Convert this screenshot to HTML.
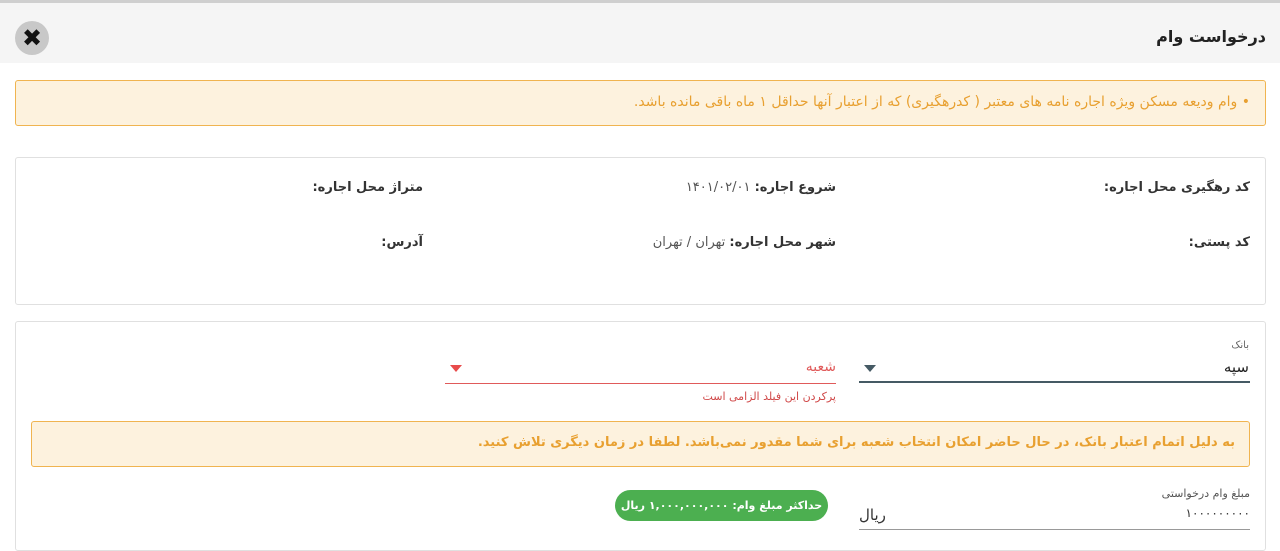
<!DOCTYPE html>
<html><head><meta charset="utf-8"><style>
*{margin:0;padding:0;box-sizing:border-box}
body{width:1280px;height:537px;overflow:hidden;background:#fff;font-family:"DejaVu Sans","Liberation Sans",sans-serif;position:relative}
.a{position:absolute;white-space:nowrap;direction:rtl}
</style></head><body>
<div class="a" style="left:0;top:0;width:1280px;height:63px;background:#f5f5f5;border-top:3px solid #cfcfcf"></div>
<div class="a" style="left:15px;top:21px;width:34px;height:34px;border-radius:50%;background:#c8c8c8;color:#111;font-size:24px;font-weight:bold;text-align:center;line-height:34px;direction:ltr">✖</div>
<div class="a" style="right:14px;top:27px;font-size:16px;font-weight:bold;color:#222">درخواست وام</div>

<div class="a" style="left:15px;top:80px;width:1251px;height:46px;background:#fdf2de;border:1px solid #f0b450;border-radius:3px"></div>
<div class="a" style="right:30px;top:94px;font-size:14px;color:#e8a030">• وام ودیعه مسکن ویژه اجاره نامه های معتبر ( کدرهگیری) که از اعتبار آنها حداقل ۱ ماه باقی مانده باشد.</div>

<div class="a" style="left:15px;top:157px;width:1251px;height:148px;border:1px solid #e0e0e0;border-radius:3px"></div>
<div class="a" style="right:30px;top:180px;font-size:13px;font-weight:bold;color:#333">کد رهگیری محل اجاره:</div>
<div class="a" style="right:444px;top:180px;font-size:13px;color:#555"><b style="color:#333">شروع اجاره:</b> ۱۴۰۱/۰۲/۰۱</div>
<div class="a" style="right:857px;top:180px;font-size:13px;font-weight:bold;color:#333">متراژ محل اجاره:</div>
<div class="a" style="right:30px;top:235px;font-size:13px;font-weight:bold;color:#333">کد پستی:</div>
<div class="a" style="right:444px;top:235px;font-size:13px;color:#555"><b style="color:#333">شهر محل اجاره:</b> تهران / تهران</div>
<div class="a" style="right:857px;top:235px;font-size:13px;font-weight:bold;color:#333">آدرس:</div>

<div class="a" style="left:15px;top:321px;width:1251px;height:230px;border:1px solid #e0e0e0;border-radius:3px"></div>
<div class="a" style="right:31px;top:340px;font-size:10px;color:#666">بانک</div>
<div class="a" style="right:31px;top:358px;font-size:15px;color:#222">سپه</div>
<div class="a" style="left:859px;top:381px;width:391px;height:2px;background:#455a64"></div>
<div class="a" style="left:864px;top:365px;width:0;height:0;border-left:6px solid transparent;border-right:6px solid transparent;border-top:7px solid #455a64"></div>
<div class="a" style="right:444px;top:359px;font-size:14px;color:#e05a5a">شعبه</div>
<div class="a" style="left:445px;top:383px;width:391px;height:1px;background:#e05a5a"></div>
<div class="a" style="left:450px;top:365px;width:0;height:0;border-left:6px solid transparent;border-right:6px solid transparent;border-top:7px solid #e84b4b"></div>
<div class="a" style="right:444px;top:390px;font-size:11px;color:#d04848">پرکردن این فیلد الزامی است</div>

<div class="a" style="left:31px;top:421px;width:1219px;height:46px;background:#fdf2de;border:1px solid #f0b450;border-radius:3px"></div>
<div class="a" style="right:45px;top:435px;font-size:13px;font-weight:bold;color:#e8a030">به دلیل اتمام اعتبار بانک، در حال حاضر امکان انتخاب شعبه برای شما مقدور نمی‌باشد. لطفا در زمان دیگری تلاش کنید.</div>

<div class="a" style="right:30px;top:487px;font-size:11px;color:#555">مبلغ وام درخواستی</div>
<div class="a" style="right:30px;top:506px;font-size:12px;color:#333">۱۰۰۰۰۰۰۰۰۰</div>
<div class="a" style="left:859px;top:506px;font-size:15px;color:#333">ریال</div>
<div class="a" style="left:859px;top:529px;width:391px;height:1px;background:#999"></div>
<div class="a" style="left:615px;top:490px;width:213px;height:31px;border-radius:16px;background:#4caf50;color:#fff;font-size:11px;font-weight:bold;text-align:center;line-height:31px;direction:rtl">حداکثر مبلغ وام: ۱,۰۰۰,۰۰۰,۰۰۰ ریال</div>
</body></html>
